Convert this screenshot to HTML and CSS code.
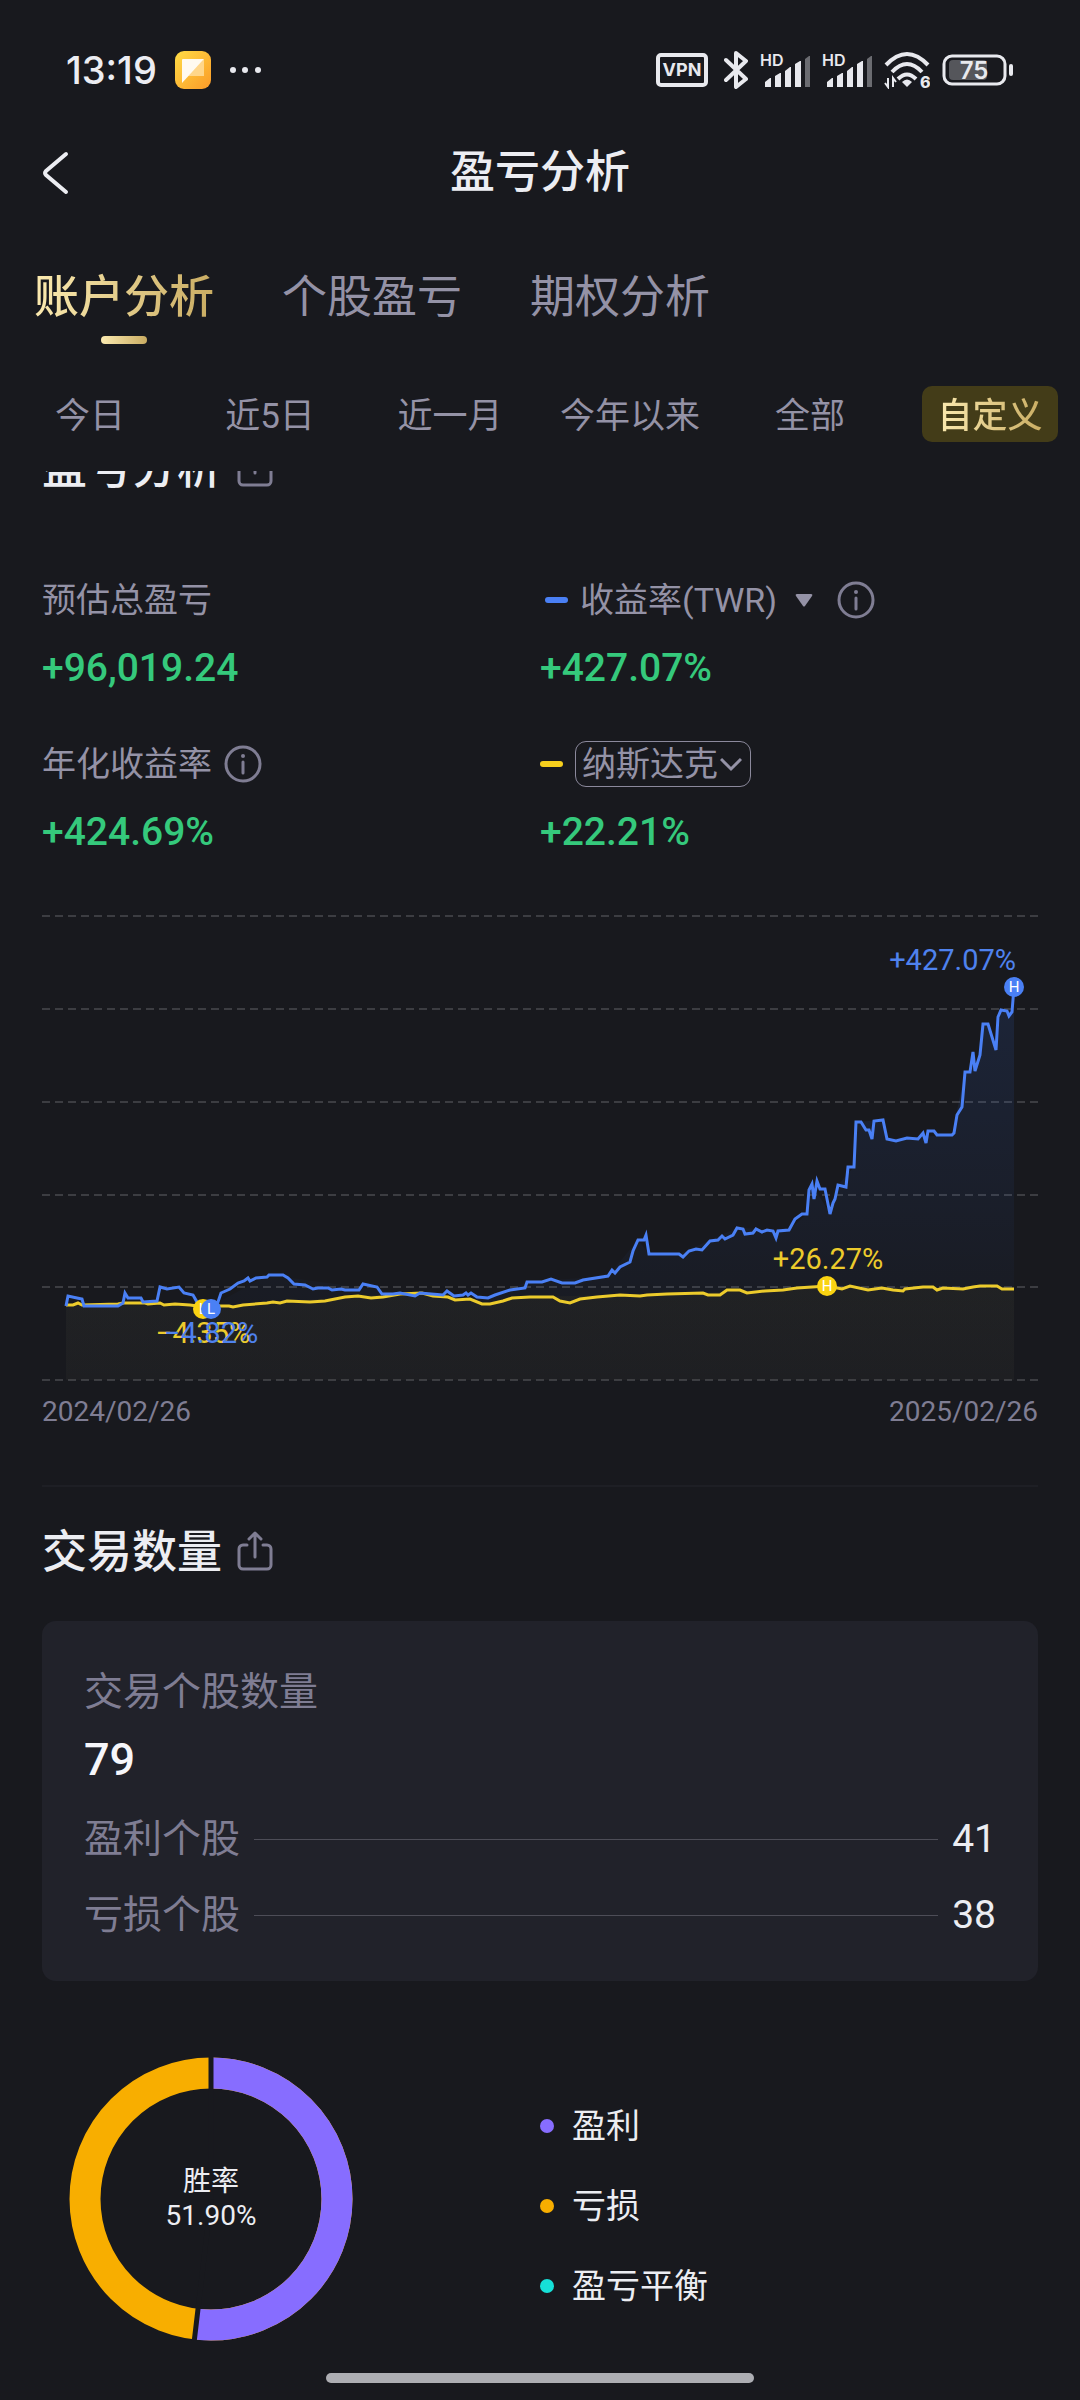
FILE: index.html
```
<!DOCTYPE html>
<html lang="zh-CN">
<head>
<meta charset="utf-8">
<meta name="viewport" content="width=device-width, initial-scale=1">
<title>盈亏分析</title>
<link rel="stylesheet" href="styles.css">
</head>
<body>
<svg class="defs" width="0" height="0" aria-hidden="true">
  <symbol id="share" viewBox="0 0 36 40">
    <path d="M10 14H6a4 4 0 0 0-4 4v16a4 4 0 0 0 4 4h24a4 4 0 0 0 4-4V18a4 4 0 0 0-4-4h-4M18 26V3M12 8l6-6 6 6" fill="none" stroke="currentColor" stroke-width="3" stroke-linecap="round" stroke-linejoin="round"/>
  </symbol>
  <symbol id="info" viewBox="0 0 38 38">
    <circle cx="19" cy="19" r="17" fill="none" stroke="currentColor" stroke-width="3"/>
    <path d="M19 17v11" stroke="currentColor" stroke-width="3" stroke-linecap="round"/>
    <circle cx="19" cy="11" r="2" fill="currentColor"/>
  </symbol>
  <symbol id="signal" viewBox="0 0 50 34">
    <path d="M5 34v-5l5-4h1v9zM15 34V23l5-3h1v14zM25 34V18l5-4h1v20zM35 34V11l5-3h1v26z" fill="#e8e9ee"/>
    <path d="M45 34V6l4-3h1v31z" fill="#6b6c71"/>
  </symbol>
</svg>

<div class="status">
  <div class="status-left">
    <span class="clock">13:19</span>
    <svg width="36" height="38" viewBox="0 0 36 38" aria-hidden="true">
      <defs><linearGradient id="app" x1="0" y1="0" x2="1" y2="1"><stop offset="0" stop-color="#ffdc45"/><stop offset="1" stop-color="#fb9a28"/></linearGradient></defs>
      <rect width="36" height="38" rx="9" fill="url(#app)"/>
      <path d="M29 8v17H13z" fill="#ffd68a"/>
      <path d="M8 8h21L7 32V9a1 1 0 0 1 1-1z" fill="#fffaf0"/>
    </svg>
    <svg width="32" height="8" viewBox="0 0 32 8" fill="#e8e9ee" aria-hidden="true"><circle cx="4" cy="4" r="3"/><circle cx="16" cy="4" r="3"/><circle cx="29" cy="4" r="3"/></svg>
  </div>
  <div class="status-right">
    <svg width="52" height="34" viewBox="0 0 52 34"><rect x="2" y="2" width="48" height="30" rx="3" fill="none" stroke="#e8e9ee" stroke-width="4"/><text x="26" y="23" text-anchor="middle" class="vpn">VPN</text></svg>
    <svg class="bluetooth" width="24" height="38" viewBox="0 0 24 38"><path d="M2 9l20 19-10 8V2l10 8L2 29" fill="none" stroke="#e8e9ee" stroke-width="4" stroke-linejoin="round" stroke-linecap="round"/></svg>
    <svg width="50" height="34"><use href="#signal"/><text x="0" y="13" class="hd">HD</text></svg>
    <svg width="50" height="34"><use href="#signal"/><text x="0" y="13" class="hd">HD</text></svg>
    <svg width="46" height="38" viewBox="0 0 46 38">
      <path d="M2 14q21-22 42 0M8 21q15-16 30 0M14 28q9-9 18 0" fill="none" stroke="#e8e9ee" stroke-width="4"/>
      <path d="M18 31q5-5 10 0l-5 5z" fill="#e8e9ee"/>
      <path d="M4 27v9l-3-4M9 36v-9l3 4" fill="none" stroke="#e8e9ee" stroke-width="2"/>
      <text x="36" y="37" class="wifi-gen">6</text>
    </svg>
    <svg width="72" height="32" viewBox="0 0 72 32"><rect x="2" y="2" width="61" height="28" rx="8" fill="none" stroke="#e8e9ee" stroke-width="3"/><rect x="7" y="6" width="38" height="20" rx="4" fill="#55565b"/><path d="M69 12v8" stroke="#e8e9ee" stroke-width="4" stroke-linecap="round"/><text x="32" y="25" text-anchor="middle" class="battery">75</text></svg>
  </div>
</div>

<header class="bar">
  <button class="back" type="button" aria-label="返回">
    <svg width="26" height="44" viewBox="0 0 26 44"><path d="M23 3L3 20q-2 2 0 4l20 17" fill="none" stroke="#ecedf2" stroke-width="4" stroke-linecap="round"/></svg>
  </button>
  <h1>盈亏分析</h1>
</header>

<nav class="tabs">
  <a class="tab active" href="#account"><span class="gold">账户分析</span></a>
  <a class="tab" href="#stock">个股盈亏</a>
  <a class="tab" href="#option">期权分析</a>
</nav>

<div class="filters">
  <button type="button">今日</button>
  <button type="button">近5日</button>
  <button type="button">近一月</button>
  <button type="button">今年以来</button>
  <button type="button">全部</button>
  <button type="button" class="selected"><span class="gold">自定义</span></button>
</div>

<main>
  <section id="account">
    <div class="heading scrolled">
      <h2>盈亏分析</h2>
      <button type="button" class="icon" aria-label="分享盈亏分析"><svg width="36" height="40"><use href="#share"/></svg></button>
    </div>

    <div class="stats">
      <div class="stat">
        <div class="label">预估总盈亏</div>
        <div class="value">+96,019.24</div>
      </div>
      <div class="stat">
        <div class="label twr">
          <i class="key blue"></i>
          <label class="picker">
            <select aria-label="收益率算法"><option>收益率(TWR)</option></select>
            <svg width="18" height="14" viewBox="0 0 18 14"><path d="M2 1h14q2 0 1 2l-7 10q-1 1-2 0L1 3Q0 1 2 1z" fill="currentColor"/></svg>
          </label>
          <button type="button" class="icon" aria-label="收益率说明"><svg width="38" height="38"><use href="#info"/></svg></button>
        </div>
        <div class="value">+427.07%</div>
      </div>
      <div class="stat">
        <div class="label">年化收益率 <button type="button" class="icon" aria-label="年化收益率说明"><svg width="38" height="38"><use href="#info"/></svg></button></div>
        <div class="value">+424.69%</div>
      </div>
      <div class="stat">
        <div class="label">
          <i class="key yellow"></i>
          <label class="picker boxed">
            <select aria-label="对比指数"><option>纳斯达克</option></select>
            <svg width="22" height="16" viewBox="0 0 22 16"><path d="M1 3l10 10L21 3" fill="none" stroke="currentColor" stroke-width="3"/></svg>
          </label>
        </div>
        <div class="value">+22.21%</div>
      </div>
    </div>

    <svg class="chart" viewBox="42 900 996 490" role="img" aria-label="收益率走势">
      <defs>
        <linearGradient id="fb" gradientUnits="userSpaceOnUse" x1="0" y1="987" x2="0" y2="1380"><stop offset="0" stop-color="#3d7bff" stop-opacity=".12"/><stop offset="1" stop-color="#3d7bff" stop-opacity="0"/></linearGradient>
        <linearGradient id="fy" gradientUnits="userSpaceOnUse" x1="0" y1="1286" x2="0" y2="1380"><stop offset="0" stop-color="#4a4320" stop-opacity=".16"/><stop offset="1" stop-color="#4a4a40" stop-opacity=".12"/></linearGradient>
      </defs>
      <path class="grid" d="M42 916H1038M42 1009H1038M42 1102H1038M42 1195H1038M42 1287H1038M42 1380H1038"/>
      <path fill="url(#fb)" d="M66 1380V1306L211 1306 269 1275 400 1293 488 1298 527 1282 608 1276 638 1240 649 1254 679 1254 737 1228 789 1230 807 1214 812 1184 830 1214 838 1185 854 1167 856 1122 883 1120 887 1139 952 1135 965 1072 970 1072 980 1055 983 1024 988 1024 996 1050 1001 1010 1012 1012 1014 987V1380z"/>
      <path fill="url(#fy)" d="M66 1380V1305L243 1305 358 1296 422 1293 488 1304 530 1297 703 1293 827 1286 1014 1289V1380z"/>
      <polyline class="line-yellow" points="66,1305 73,1305 78,1303 82,1305 118,1304 123,1303 145,1303 148,1304 160,1303 164,1305 175,1304 190,1305 197,1306 203,1309 220,1306 229,1306 233,1307 243,1305 267,1303 273,1302 280,1303 287,1301 310,1302 325,1301 345,1297 358,1296 371,1298 383,1297 400,1294 422,1293 433,1296 448,1297 455,1300 470,1299 482,1304 490,1304 503,1301 512,1298 530,1297 553,1297 560,1301 570,1303 580,1299 597,1297 620,1295 640,1296 647,1295 667,1294 703,1293 708,1295 720,1295 727,1290 740,1290 747,1293 765,1291 783,1290 797,1288 827,1286 842,1289 850,1286 868,1290 882,1288 893,1290 903,1291 905,1289 923,1287 933,1287 937,1290 943,1288 963,1289 973,1287 980,1286 997,1286 1002,1289 1014,1289"/>
      <polyline class="line-blue" points="66,1306 68,1296 77,1298 82,1299 84,1306 118,1306 123,1303 125,1293 128,1298 141,1298 143,1302 157,1301 160,1287 167,1289 179,1287 184,1293 193,1295 197,1302 211,1309 218,1302 221,1293 230,1289 238,1283 244,1281 248,1278 250,1281 256,1278 267,1277 269,1275 283,1275 288,1278 294,1284 305,1285 313,1289 318,1288 328,1288 332,1290 341,1289 345,1290 348,1290 359,1290 363,1284 377,1287 382,1294 393,1294 400,1293 415,1296 420,1293 443,1295 447,1291 454,1296 463,1295 466,1293 468,1295 471,1293 477,1297 488,1298 495,1295 510,1290 525,1288 527,1282 542,1282 551,1279 562,1283 575,1283 583,1280 608,1276 612,1270 615,1273 620,1267 630,1262 633,1251 638,1240 644,1240 646,1235 649,1254 679,1254 683,1257 689,1251 696,1249 702,1250 710,1241 718,1240 722,1236 725,1239 733,1235 737,1228 743,1229 745,1234 753,1233 756,1229 762,1232 767,1230 773,1231 776,1238 778,1231 789,1230 795,1219 802,1214 807,1214 809,1190 812,1184 814,1199 817,1181 820,1189 825,1189 830,1214 833,1203 835,1199 838,1185 846,1187 848,1167 854,1167 856,1122 861,1122 866,1130 869,1130 872,1139 874,1121 883,1120 887,1139 896,1141 907,1138 918,1139 923,1133 926,1143 928,1131 934,1131 937,1135 952,1135 954,1133 957,1115 962,1107 965,1072 970,1072 973,1052 975,1071 980,1055 983,1024 988,1024 996,1050 998,1017 1001,1010 1007,1011 1009,1016 1012,1012 1014,987"/>
      <g text-anchor="middle">
        <circle cx="203" cy="1309" r="10" fill="#fad312"/><text x="203" y="1314" class="mark">L</text>
        <circle cx="211" cy="1309" r="10" fill="#4a80f5"/><text x="211" y="1314" class="mark">L</text>
        <circle cx="827" cy="1286" r="10" fill="#fad312"/><text x="827" y="1291" class="mark">H</text>
        <circle cx="1014" cy="987" r="10" fill="#4a80f5"/><text x="1014" y="992" class="mark">H</text>
        <text x="203" y="1343" class="tag yellow-text">−4.35%</text>
        <text x="211" y="1343" class="tag blue-text">−4.82%</text>
        <text x="828" y="1269" class="tag yellow-text">+26.27%</text>
      </g>
      <text x="1016" y="970" text-anchor="end" class="tag blue-text">+427.07%</text>
    </svg>
    <div class="dates"><time datetime="2024-02-26">2024/02/26</time><time datetime="2025-02-26">2025/02/26</time></div>
  </section>

  <section class="trades">
    <div class="heading">
      <h2>交易数量</h2>
      <button type="button" class="icon" aria-label="分享交易数量"><svg width="36" height="40"><use href="#share"/></svg></button>
    </div>
    <div class="card">
      <div class="card-label">交易个股数量</div>
      <div class="total">79</div>
      <div class="row"><span>盈利个股</span><i></i><b>41</b></div>
      <div class="row"><span>亏损个股</span><i></i><b>38</b></div>
    </div>
    <div class="rate">
      <div class="donut">
        <svg viewBox="0 0 284 284" aria-hidden="true">
          <circle class="ring loss" cx="142" cy="142" r="126" />
          <circle class="ring win" cx="142" cy="142" r="126" pathLength="1000" stroke-dasharray="519 481" transform="rotate(-90 142 142)"/>
          <path d="M142 142V-2M142 142L125 286" stroke="#18191e" stroke-width="5"/>
        </svg>
        <div class="donut-text"><span>胜率</span><span>51.90%</span></div>
      </div>
      <ul class="legend">
        <li><i class="dot win-dot"></i>盈利</li>
        <li><i class="dot loss-dot"></i>亏损</li>
        <li><i class="dot even-dot"></i>盈亏平衡</li>
      </ul>
    </div>
  </section>
</main>
<div class="home"></div>
</body>
</html>
```
FILE: styles.css
```
* {
  box-sizing: border-box;
}

body {
  margin: 0;
  background: #18191e;
  color: #ecedf2;
  font-family: Roboto, "Noto Sans CJK SC", sans-serif;
}

h1,
h2,
ul {
  margin: 0;
  padding: 0;
}

button,
select {
  margin: 0;
  padding: 0;
  border: 0;
  background: none;
  color: inherit;
  font: inherit;
  appearance: none;
}

svg {
  display: block;
  flex: none;
}

.defs {
  position: absolute;
}

/* Status bar */
.status {
  display: flex;
  justify-content: space-between;
  align-items: center;
  height: 100px;
  padding: 40px 66px 0;
}

.status-left,
.status-right {
  display: flex;
  align-items: center;
}

.status-left {
  gap: 18px;
}

.clock {
  font: 500 38px/60px Inter, sans-serif;
}

.status-right {
  gap: 12px;
}

.bluetooth {
  margin-left: 4px;
}

.battery,
.vpn,
.hd,
.wifi-gen {
  fill: #e8e9ee;
  font-family: Inter, sans-serif;
  font-weight: 600;
}

.battery {
  font-size: 24px;
}

.vpn {
  font-size: 18px;
  font-weight: 700;
}

.hd {
  font-size: 16px;
}

.wifi-gen {
  font-size: 16px;
  font-weight: 800;
}

/* Title bar */
.bar {
  display: grid;
  grid-template-columns: 1fr auto 1fr;
  align-items: center;
  height: 144px;
  padding: 2px 43px 0;
}

.bar h1 {
  font-size: 45px;
  line-height: 60px;
  font-weight: 500;
}

.back {
  justify-self: start;
}

.gold {
  background: linear-gradient(90deg, #fbeab0, #c9ac62);
  -webkit-background-clip: text;
  background-clip: text;
  color: transparent;
}

.tabs {
  display: flex;
  gap: 68px;
  padding: 24px 34px 0;
}

.tab {
  display: grid;
  justify-items: center;
  gap: 8px;
  color: #9492a6;
  font-size: 45px;
  line-height: 60px;
  text-decoration: none;
}

.tab.active {
  font-weight: 500;
}

.tab.active::after {
  content: "";
  width: 46px;
  height: 8px;
  border-radius: 4px;
  background: linear-gradient(90deg, #fbeab0, #c9ac62);
}

.filters {
  display: grid;
  grid-template-columns: repeat(6, 1fr);
  justify-items: center;
  padding: 42px 0 29px;
}

.filters button {
  padding: 6px 15px 0;
  border-radius: 10px;
  color: #9492a6;
  font-size: 35px;
  line-height: 50px;
  white-space: nowrap;
}

.filters .selected {
  background: #433c18;
  font-weight: 500;
}

.filters .selected .gold {
  display: block;
}

/* Content */
main {
  overflow: hidden;
  padding: 0 42px;
}

.heading {
  display: flex;
  align-items: center;
  gap: 15px;
}

.heading h2 {
  padding-top: 4px;
  font-size: 45px;
  line-height: 56px;
  font-weight: 500;
}

/* The list is scrolled, so its first heading is partly under the filters */
.scrolled {
  margin-top: -34px;
}

.icon {
  color: #7f7d93;
}

.stats {
  display: grid;
  grid-template-columns: 1fr 1fr;
  row-gap: 42px;
  padding-top: 76px;
}

.stat {
  display: grid;
  gap: 14px;
}

.label {
  display: flex;
  align-items: center;
  gap: 12px;
  height: 54px;
  color: #9492a6;
  font-size: 34px;
  line-height: 50px;
}

.twr {
  padding-left: 5px;
}

.key {
  width: 23px;
  height: 6px;
  border-radius: 3px;
}

.blue {
  background: #4a80f5;
}

.yellow {
  background: #f6cf1d;
}

.picker {
  display: flex;
  align-items: center;
  gap: 17px;
  margin-right: 12px;
}

.boxed {
  gap: 2px;
  height: 46px;
  padding: 0 8px 0 6px;
  border: 1px solid #8b899c;
  border-radius: 11px;
}

.value {
  color: #35c97c;
  font-size: 39px;
  line-height: 54px;
  font-weight: 500;
}

.chart {
  width: 100%;
  height: auto;
  margin-top: 41px;
}

.grid {
  fill: none;
  stroke: #3c3d42;
  stroke-width: 2;
  stroke-dasharray: 8 5;
}

.line-blue,
.line-yellow {
  fill: none;
  stroke-width: 3;
}

.line-blue {
  stroke: #4a80f5;
}

.line-yellow {
  stroke: #eccb2c;
}

.mark {
  fill: #fff;
  font-size: 15px;
}

.tag {
  font-size: 29px;
}

.blue-text {
  fill: #4f82ee;
}

.yellow-text {
  fill: #eccb2c;
}

.dates {
  display: flex;
  justify-content: space-between;
  padding-top: 5px;
  color: #7f7d93;
  font-size: 28px;
  line-height: 34px;
}

.trades {
  margin-top: 56px;
  padding-top: 34px;
  border-top: 2px solid #1e1f25;
}

.card {
  margin-top: 40px;
  padding: 44px 42px 28px;
  border-radius: 14px;
  background: #21222a;
  color: #7f7d93;
  font-size: 39px;
}

.card-label {
  line-height: 54px;
}

.total {
  margin: 14px 0;
  color: #f6f6fa;
  font-size: 45px;
  line-height: 54px;
  font-weight: 500;
}

.row {
  display: flex;
  align-items: center;
  gap: 14px;
  line-height: 76px;
}

.row i {
  flex: 1;
  height: 1px;
  background: #4d4d57;
}

.row b {
  color: #ecedf2;
  font-weight: 400;
}

.rate {
  display: grid;
  grid-template-columns: 1fr 1fr;
  align-items: center;
  margin-top: 76px;
}

.donut {
  display: grid;
  place-items: center;
  width: 284px;
  margin-left: 27px;
}

.donut svg,
.donut-text {
  grid-area: 1 / 1;
}

.donut svg {
  width: 100%;
}

.donut-text {
  display: grid;
  justify-items: center;
  font-size: 28px;
  line-height: 34px;
}

.ring {
  fill: none;
  stroke-width: 31;
}

.loss {
  stroke: #f8ae00;
}

.win {
  stroke: #876dff;
}

.legend {
  display: grid;
  gap: 26px;
  padding-top: 14px;
  list-style: none;
  font-size: 34px;
  line-height: 54px;
}

.legend li {
  display: flex;
  align-items: center;
  gap: 18px;
}

.dot {
  width: 14px;
  height: 14px;
  border-radius: 50%;
}

.win-dot {
  background: #876dff;
}

.loss-dot {
  background: #f8ae00;
}

.even-dot {
  background: #16e0d8;
}

.home {
  width: 428px;
  height: 10px;
  margin: 32px auto 18px;
  border-radius: 5px;
  background: #adaeb3;
}
```
